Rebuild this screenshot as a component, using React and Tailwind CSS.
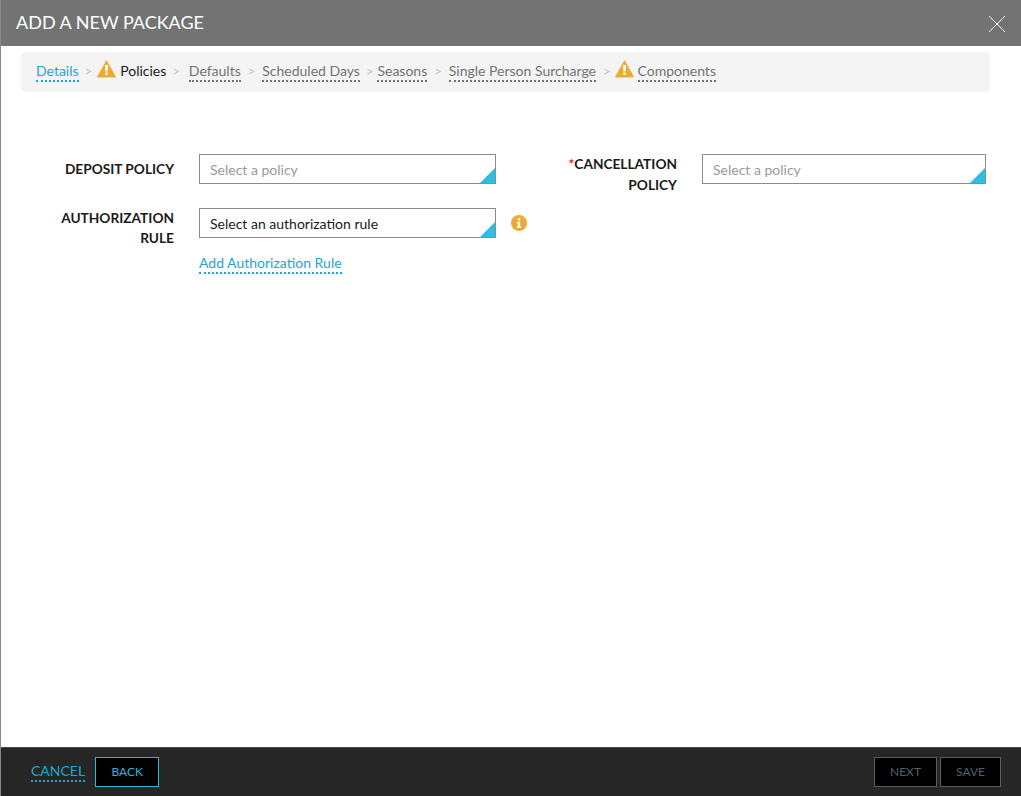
import React from 'react';

const crumbLink = 'border-b-2 border-dotted leading-[18px] text-[#737373] border-[#737373]';

const Warning = ({ className }) => (
  <svg width="19" height="18" viewBox="0 0 19 18" className={`shrink-0 mb-[7px] ${className}`}>
    <path d="M9.5 0.7 L18.6 17 H0.4 Z" fill="#ecaa33" stroke="#ecaa33" strokeWidth="0.8" strokeLinejoin="round" />
    <path d="M8 5 H11 L10.5 11.5 H8.5 Z" fill="#fff" />
    <rect x="8.3" y="12.6" width="2.4" height="2.4" fill="#fff" />
  </svg>
);

const Sep = ({ className = 'mx-[6px]' }) => <span className={`text-[#c4c4c4] text-[13px] ${className}`}>&gt;</span>;

const Select = ({ text, placeholder }) => (
  <div className={`relative h-[30px] border border-[#8c8c8c] bg-white pl-[10px] text-[14px] leading-[29px] ${placeholder ? 'text-[#9a9a9a]' : 'text-[#1a1a1a]'}`}>
    {text}
    <svg width="15" height="15" viewBox="0 0 15 15" className="absolute right-0 bottom-0">
      <path d="M15 0 V15 H0 Z" fill="#29c0e3" />
    </svg>
  </div>
);

const FooterBtn = ({ children, active, width }) => (
  <button className={`h-[30px] bg-black text-[12px] border ${width} ${active ? 'border-[#29b8dc] text-[#29b8dc]' : 'border-[#5c5c5c] text-[#4f6375]'}`}>
    {children}
  </button>
);

export default function App() {
  return (
    <div className="w-[1021px] h-[796px] flex flex-col bg-white border-l border-[#8a8a8a] font-['Lato',sans-serif] overflow-hidden">
      {/* header */}
      <div className="h-[46px] shrink-0 bg-[#737373] flex items-center justify-between pl-[15px] pr-[15px]">
        <span className="text-white text-[18px] leading-[22px] mb-[2px]">ADD A NEW PACKAGE</span>
        <svg width="18" height="18" viewBox="0 0 18 18" stroke="#fff" strokeWidth="1" className="mt-[2px]">
          <path d="M1 1 L17 17 M17 1 L1 17" />
        </svg>
      </div>

      {/* steps */}
      <div className="h-[40px] shrink-0 mt-[6px] ml-[20px] mr-[31px] bg-[#f4f4f4] rounded-[4px] flex items-center pl-[15px] text-[14px]">
        <a className="border-b-2 border-dotted leading-[18px] text-[#1ba8d0] border-[#1ba8d0]">Details</a>
        <Sep className="ml-[6px] mr-[5px]" />
        <Warning className="mr-[4px]" />
        <span className="leading-[18px] border-b-2 border-transparent text-[#1a1a1a]">Policies</span>
        <Sep className="ml-[6px] mr-[9px]" />
        <a className={crumbLink}>Defaults</a>
        <Sep className="ml-[7px] mr-[7px]" />
        <a className={crumbLink}>Scheduled Days</a>
        <Sep className="ml-[6px] mr-[4px]" />
        <a className={crumbLink}>Seasons</a>
        <Sep className="ml-[7px] mr-[7px]" />
        <a className={crumbLink}>Single Person Surcharge</a>
        <Sep className="ml-[7px] mr-[4px]" />
        <Warning className="mr-[4px]" />
        <a className={crumbLink}>Components</a>
      </div>

      {/* form */}
      <div className="flex-1 pt-[62px] flex">
        <div className="w-[495px] shrink-0">
          <div className="flex items-start">
            <label className="w-[173px] shrink-0 text-right text-[13.7px] font-bold text-[#1a1a1a] leading-[21px] pt-[4px]">DEPOSIT POLICY</label>
            <div className="w-[297px] shrink-0 ml-[25px]">
              <Select text="Select a policy" placeholder />
            </div>
          </div>
          <div className="flex items-start mt-[24px]">
            <label className="w-[173px] shrink-0 text-right text-[13.7px] font-bold text-[#1a1a1a] leading-[20px]">AUTHORIZATION<br />RULE</label>
            <div className="w-[297px] shrink-0 ml-[25px]">
              <Select text="Select an authorization rule" />
              <a className="inline-block mt-[16px] text-[14px] leading-[18px] text-[#1ba8d0] border-b-2 border-dotted border-[#1ba8d0]">Add Authorization Rule</a>
            </div>
            <svg width="16" height="16" viewBox="0 0 16 16" className="shrink-0 ml-[15px] mt-[7px]">
              <circle cx="8" cy="8" r="8" fill="#ecaa33" />
              <rect x="6.8" y="3" width="2.4" height="2.4" fill="#fff" />
              <path d="M5.8 6.8 H9.2 V11.4 H10.2 V13 H5.8 V11.4 H6.8 V8.3 H5.8 Z" fill="#fff" />
            </svg>
          </div>
        </div>
        <div className="flex items-start ml-[20px]">
          <label className="w-[161px] shrink-0 text-right text-[13.7px] font-bold text-[#1a1a1a] leading-[21px] -mt-[1px]">
            <span className="text-[#e8202a]">*</span>CANCELLATION<br />POLICY
          </label>
          <div className="w-[284px] shrink-0 ml-[25px]">
            <Select text="Select a policy" placeholder />
          </div>
        </div>
      </div>

      {/* footer */}
      <div className="h-[49px] shrink-0 bg-[#262626] border-t border-[#4a4a4a] flex items-center justify-between pl-[30px] pr-[20px]">
        <div className="flex items-center">
          <a className="text-[#1ba8d0] text-[14px] leading-[18px] border-b-2 border-dotted border-[#1ba8d0]">CANCEL</a>
          <div className="ml-[10px]"><FooterBtn active width="w-[64px]">BACK</FooterBtn></div>
        </div>
        <div className="flex items-center gap-[3px]">
          <FooterBtn width="w-[63px]">NEXT</FooterBtn>
          <FooterBtn width="w-[61px]">SAVE</FooterBtn>
        </div>
      </div>
    </div>
  );
}
